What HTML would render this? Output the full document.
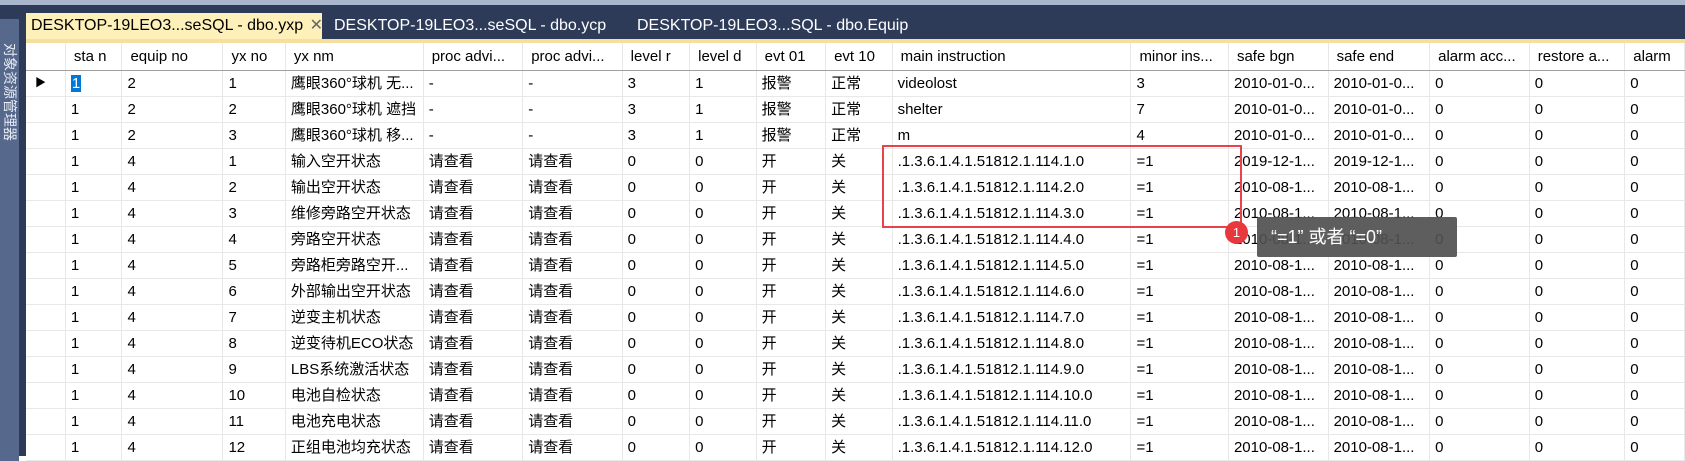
<!DOCTYPE html>
<html><head><meta charset="utf-8"><style>
*{margin:0;padding:0;box-sizing:border-box}
body{width:1685px;height:456px;overflow:hidden;background:#fff;font-family:"Liberation Sans","Noto Sans CJK SC",sans-serif;font-size:15px;color:#000;position:relative}
#top{position:absolute;left:0;top:0;width:1685px;height:5px;background:#a9b6cc}
#nav{position:absolute;left:0;top:5px;width:1685px;height:37px;background:#2d3b59}
#yl{position:absolute;left:26px;top:39px;width:1659px;height:4px;background:#f5de9e}
.tab{position:absolute;top:13px;height:27px;line-height:26px;padding-left:5px;color:#fff;font-size:16px;white-space:nowrap}
#t1{left:26px;width:296px;background:#fdf0b9;color:#000}
#side{position:absolute;left:0;top:5px;width:26px;height:451px;background:#2d3b59}
#sidein{position:absolute;left:0;top:14px;width:19px;height:442px;background:#56688c;color:#e8ecf4;font-size:14px;writing-mode:vertical-rl;text-orientation:sideways;line-height:19px;padding-top:24px}
#grid{position:absolute;left:26px;top:43px}
table{border-collapse:collapse;table-layout:fixed}
td{height:26px;border-right:1px solid #e8e8e8;border-bottom:1px solid #e8e8e8;padding-left:5px;white-space:nowrap;overflow:hidden;line-height:25px}
tr.h td{height:27px;border-bottom:1px solid #a0a0a0;padding-left:8px}
td.rh{padding:0}
.sel{background:#0078d7;color:#fff;padding:0 1px}
#box{position:absolute;left:882px;top:145px;width:360px;height:83px;border:2px solid #e8424a}
#tip{position:absolute;left:1257px;top:217px;width:200px;height:40px;background:rgba(80,80,80,.92);color:#fff;font-size:18px;line-height:40px;padding-left:14px;border-radius:2px}
#badge{position:absolute;left:1225px;top:221px;width:23px;height:23px;border-radius:50%;background:#e8383d;color:#fff;font-size:13px;text-align:center;line-height:23px}
</style></head><body>
<div id="top"></div><div id="nav"></div>
<div class="tab" id="t1">DESKTOP-19LEO3...seSQL - dbo.yxp <span style="color:#666;margin-left:2px">✕</span></div>
<div class="tab" style="left:329px">DESKTOP-19LEO3...seSQL - dbo.ycp</div>
<div class="tab" style="left:632px">DESKTOP-19LEO3...SQL - dbo.Equip</div>
<div id="yl"></div>
<div id="side"><div id="sidein">对象资源管理器</div></div>
<div id="grid"><table>
<colgroup><col style="width:40px"><col style="width:57px"><col style="width:102px"><col style="width:63px"><col style="width:138px"><col style="width:100px"><col style="width:100px"><col style="width:68px"><col style="width:67px"><col style="width:70px"><col style="width:67px"><col style="width:240px"><col style="width:98px"><col style="width:100px"><col style="width:102px"><col style="width:100px"><col style="width:96px"><col style="width:60px"></colgroup>
<tr class="h"><td class="rh"></td><td>sta n</td><td>equip no</td><td>yx no</td><td>yx nm</td><td>proc advi...</td><td>proc advi...</td><td>level r</td><td>level d</td><td>evt 01</td><td>evt 10</td><td>main instruction</td><td>minor ins...</td><td>safe bgn</td><td>safe end</td><td>alarm acc...</td><td>restore a...</td><td>alarm</td></tr>
<tr><td class="rh" style="padding-left:9px;font-size:11px">▶</td><td><span class="sel">1</span></td><td>2</td><td>1</td><td>鹰眼360°球机 无...</td><td>-</td><td>-</td><td>3</td><td>1</td><td>报警</td><td>正常</td><td>videolost</td><td>3</td><td>2010-01-0...</td><td>2010-01-0...</td><td>0</td><td>0</td><td>0</td></tr>
<tr><td class="rh"></td><td>1</td><td>2</td><td>2</td><td>鹰眼360°球机 遮挡</td><td>-</td><td>-</td><td>3</td><td>1</td><td>报警</td><td>正常</td><td>shelter</td><td>7</td><td>2010-01-0...</td><td>2010-01-0...</td><td>0</td><td>0</td><td>0</td></tr>
<tr><td class="rh"></td><td>1</td><td>2</td><td>3</td><td>鹰眼360°球机 移...</td><td>-</td><td>-</td><td>3</td><td>1</td><td>报警</td><td>正常</td><td>m</td><td>4</td><td>2010-01-0...</td><td>2010-01-0...</td><td>0</td><td>0</td><td>0</td></tr>
<tr><td class="rh"></td><td>1</td><td>4</td><td>1</td><td>输入空开状态</td><td>请查看</td><td>请查看</td><td>0</td><td>0</td><td>开</td><td>关</td><td>.1.3.6.1.4.1.51812.1.114.1.0</td><td>=1</td><td>2019-12-1...</td><td>2019-12-1...</td><td>0</td><td>0</td><td>0</td></tr>
<tr><td class="rh"></td><td>1</td><td>4</td><td>2</td><td>输出空开状态</td><td>请查看</td><td>请查看</td><td>0</td><td>0</td><td>开</td><td>关</td><td>.1.3.6.1.4.1.51812.1.114.2.0</td><td>=1</td><td>2010-08-1...</td><td>2010-08-1...</td><td>0</td><td>0</td><td>0</td></tr>
<tr><td class="rh"></td><td>1</td><td>4</td><td>3</td><td>维修旁路空开状态</td><td>请查看</td><td>请查看</td><td>0</td><td>0</td><td>开</td><td>关</td><td>.1.3.6.1.4.1.51812.1.114.3.0</td><td>=1</td><td>2010-08-1...</td><td>2010-08-1...</td><td>0</td><td>0</td><td>0</td></tr>
<tr><td class="rh"></td><td>1</td><td>4</td><td>4</td><td>旁路空开状态</td><td>请查看</td><td>请查看</td><td>0</td><td>0</td><td>开</td><td>关</td><td>.1.3.6.1.4.1.51812.1.114.4.0</td><td>=1</td><td>2010-08-1...</td><td>2010-08-1...</td><td>0</td><td>0</td><td>0</td></tr>
<tr><td class="rh"></td><td>1</td><td>4</td><td>5</td><td>旁路柜旁路空开...</td><td>请查看</td><td>请查看</td><td>0</td><td>0</td><td>开</td><td>关</td><td>.1.3.6.1.4.1.51812.1.114.5.0</td><td>=1</td><td>2010-08-1...</td><td>2010-08-1...</td><td>0</td><td>0</td><td>0</td></tr>
<tr><td class="rh"></td><td>1</td><td>4</td><td>6</td><td>外部输出空开状态</td><td>请查看</td><td>请查看</td><td>0</td><td>0</td><td>开</td><td>关</td><td>.1.3.6.1.4.1.51812.1.114.6.0</td><td>=1</td><td>2010-08-1...</td><td>2010-08-1...</td><td>0</td><td>0</td><td>0</td></tr>
<tr><td class="rh"></td><td>1</td><td>4</td><td>7</td><td>逆变主机状态</td><td>请查看</td><td>请查看</td><td>0</td><td>0</td><td>开</td><td>关</td><td>.1.3.6.1.4.1.51812.1.114.7.0</td><td>=1</td><td>2010-08-1...</td><td>2010-08-1...</td><td>0</td><td>0</td><td>0</td></tr>
<tr><td class="rh"></td><td>1</td><td>4</td><td>8</td><td>逆变待机ECO状态</td><td>请查看</td><td>请查看</td><td>0</td><td>0</td><td>开</td><td>关</td><td>.1.3.6.1.4.1.51812.1.114.8.0</td><td>=1</td><td>2010-08-1...</td><td>2010-08-1...</td><td>0</td><td>0</td><td>0</td></tr>
<tr><td class="rh"></td><td>1</td><td>4</td><td>9</td><td>LBS系统激活状态</td><td>请查看</td><td>请查看</td><td>0</td><td>0</td><td>开</td><td>关</td><td>.1.3.6.1.4.1.51812.1.114.9.0</td><td>=1</td><td>2010-08-1...</td><td>2010-08-1...</td><td>0</td><td>0</td><td>0</td></tr>
<tr><td class="rh"></td><td>1</td><td>4</td><td>10</td><td>电池自检状态</td><td>请查看</td><td>请查看</td><td>0</td><td>0</td><td>开</td><td>关</td><td>.1.3.6.1.4.1.51812.1.114.10.0</td><td>=1</td><td>2010-08-1...</td><td>2010-08-1...</td><td>0</td><td>0</td><td>0</td></tr>
<tr><td class="rh"></td><td>1</td><td>4</td><td>11</td><td>电池充电状态</td><td>请查看</td><td>请查看</td><td>0</td><td>0</td><td>开</td><td>关</td><td>.1.3.6.1.4.1.51812.1.114.11.0</td><td>=1</td><td>2010-08-1...</td><td>2010-08-1...</td><td>0</td><td>0</td><td>0</td></tr>
<tr><td class="rh"></td><td>1</td><td>4</td><td>12</td><td>正组电池均充状态</td><td>请查看</td><td>请查看</td><td>0</td><td>0</td><td>开</td><td>关</td><td>.1.3.6.1.4.1.51812.1.114.12.0</td><td>=1</td><td>2010-08-1...</td><td>2010-08-1...</td><td>0</td><td>0</td><td>0</td></tr>
</table></div>
<div id="box"></div>
<div id="tip">“=1” 或者 “=0”</div>
<div id="badge">1</div>
</body></html>
